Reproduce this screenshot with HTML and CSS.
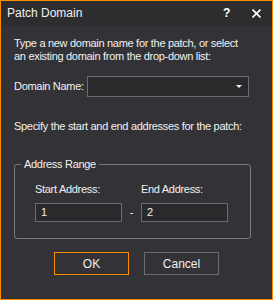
FILE: index.html
```html
<!DOCTYPE html>
<html lang="en">
<head>
    <meta charset="UTF-8">
    <title>Patch Domain</title>
    <link rel="stylesheet" href="styles.css">
</head>
<body>
    <div class="dialog">
        <div class="titlebar">
            <span class="title">Patch Domain</span>
            <span class="help">?</span>
            <span class="close">
                <svg width="9" height="9" viewBox="0 0 9 9"><path d="M0.5 0.5 L8.5 8.5 M8.5 0.5 L0.5 8.5" stroke="#ffffff" stroke-width="1.6" fill="none"/></svg>
            </span>
        </div>
        <div class="content">
            <p class="intro">Type a new domain name for the patch, or select<br>an existing domain from the drop-down list:</p>
            <div class="domain-row">
                <label>Domain Name:</label>
                <div class="combo">
                    <svg width="6" height="3" viewBox="0 0 6 3"><path d="M0 0 H6 L3 3 Z" fill="#f1f1f1"/></svg>
                </div>
            </div>
            <p class="specify">Specify the start and end addresses for the patch:</p>
            <fieldset class="range">
                <legend>Address Range</legend>
                <div class="fields">
                    <div class="field">
                        <label>Start Address:</label>
                        <div class="input">1</div>
                    </div>
                    <span class="dash">-</span>
                    <div class="field">
                        <label>End Address:</label>
                        <div class="input">2</div>
                    </div>
                </div>
            </fieldset>
            <div class="buttons">
                <button class="btn default">OK</button>
                <button class="btn">Cancel</button>
            </div>
        </div>
    </div>
</body>
</html>
```

FILE: styles.css
```css
* {
    margin: 0;
    padding: 0;
    box-sizing: border-box;
}
body {
    font-family: 'Liberation Sans', Arial, sans-serif;
    font-size: 11px;
    line-height: 13px;
    letter-spacing: -0.3px;
    color: #f1f1f1;
    background: #333337;
}
.dialog {
    width: 273px;
    height: 300px;
    border: 1px solid #ff8c00;
    background: #333337;
    display: flex;
    flex-direction: column;
}
.titlebar {
    height: 24px;
    background: #2d2d30;
    display: flex;
    align-items: center;
    padding: 0 0 0 6px;
    letter-spacing: 0;
}
.title {
    flex: 1;
    font-size: 12px;
    color: #f1f1f1;
}
.help {
    font-size: 12px;
    font-weight: bold;
    color: #ffffff;
    width: 8px;
    margin-right: 21px;
}
.close {
    display: flex;
    width: 9px;
    margin-right: 11px;
}
.content {
    padding: 12px 21px 0 13px;
    display: flex;
    flex-direction: column;
    white-space: nowrap;
}
.domain-row {
    display: flex;
    align-items: center;
    margin-top: 13px;
    height: 21px;
}
.domain-row label {
    width: 73px;
    flex-shrink: 0;
}
.combo {
    width: 162px;
    height: 21px;
    background: #2a2a2c;
    border: 1px solid #6c6c6c;
    display: flex;
    align-items: center;
    justify-content: flex-end;
    padding-right: 6px;
}
.specify {
    margin-top: 23px;
}
.range {
    margin-top: 25px;
    border: 1px solid #7a7a7a;
    border-radius: 3px;
    padding: 0;
}
.range legend {
    margin-left: 6px;
    padding: 0 3px;
    font-size: 11px;
    line-height: 13px;
}
.fields {
    display: flex;
    align-items: flex-end;
    padding: 12px 0 16px 20px;
}
.field {
    display: flex;
    flex-direction: column;
    gap: 7px;
}
.input {
    width: 87px;
    height: 19px;
    background: #2a2a2c;
    border: 1px solid #6c6c6c;
    padding-left: 5px;
    line-height: 17px;
}
.dash {
    width: 19px;
    text-align: center;
    line-height: 19px;
}
.buttons {
    display: flex;
    justify-content: center;
    gap: 15px;
    margin-top: 13px;
    padding-left: 8px;
}
.btn {
    width: 75px;
    height: 23px;
    background: #333337;
    border: 1px solid #6c6c6c;
    color: #f1f1f1;
    font-family: 'Liberation Sans', Arial, sans-serif;
    font-size: 12px;
}
.btn.default {
    border-color: #ff8c00;
}
```
